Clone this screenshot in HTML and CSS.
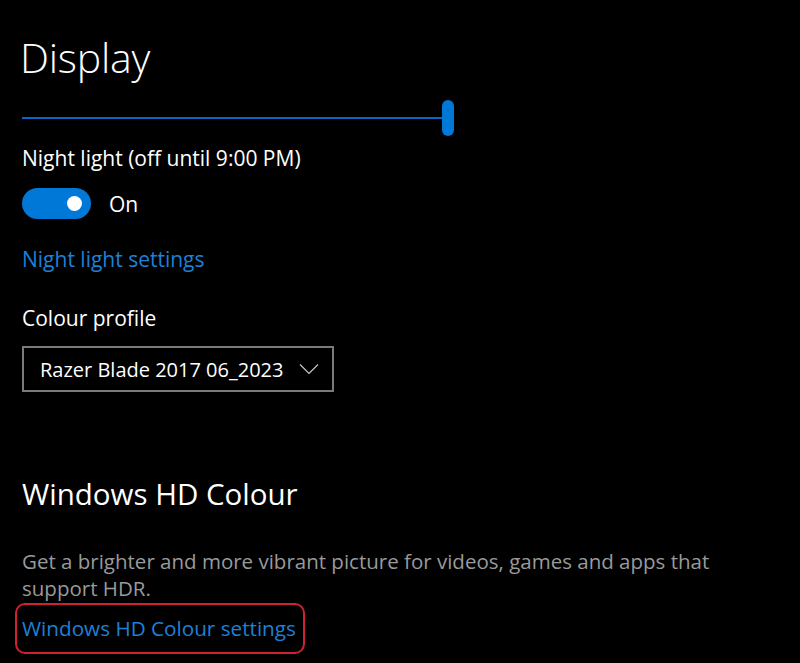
FILE: index.html
```html
<!DOCTYPE html>
<html lang="en">
<head>
<meta charset="utf-8">
<title>Display</title>
<link rel="stylesheet" href="styles.css">
</head>
<body>
<main class="page">
  <h1 class="title">Display</h1>
  <div class="slider">
    <div class="slider-track"></div>
    <div class="slider-thumb"></div>
  </div>
  <div class="label label-night">Night light (off until 9:00 PM)</div>
  <div class="toggle-row">
    <div class="toggle"><span class="toggle-knob"></span></div>
    <span class="toggle-text">On</span>
  </div>
  <a class="link link-night" href="#">Night light settings</a>
  <div class="label label-profile">Colour profile</div>
  <div class="dropdown">
    <span class="dropdown-text">Razer Blade 2017 06_2023</span>
    <svg class="chevron" width="20" height="12" viewBox="0 0 20 12"><polyline points="1,1.5 10,10.5 19,1.5" fill="none" stroke="#c8c8c8" stroke-width="1.2"/></svg>
  </div>
  <h2 class="subtitle">Windows HD Colour</h2>
  <p class="desc">Get a brighter and more vibrant picture for videos, games and apps that support HDR.</p>
  <div class="highlight">
    <a class="link link-hdr" href="#">Windows HD Colour settings</a>
  </div>
</main>
</body>
</html>
```

FILE: styles.css
```css
html, body {
  margin: 0;
  padding: 0;
  background: #000;
}
body {
  width: 800px;
  height: 663px;
  overflow: hidden;
  font-family: "Open Sans", "Noto Sans", sans-serif;
  color: #fff;
}
.page {
  display: flex;
  flex-direction: column;
  align-items: flex-start;
  padding-left: 22px;
}
.title {
  margin: 32px 0 0 -2px;
  font-size: 41px;
  font-weight: 300;
  line-height: 50px;
  letter-spacing: -0.2px;
}
.slider {
  margin-top: 18px;
  width: 432px;
  height: 36px;
  display: flex;
  align-items: center;
}
.slider-track {
  flex: 1;
  height: 2px;
  background: #0a66c2;
}
.slider-thumb {
  width: 12px;
  height: 36px;
  border-radius: 6px;
  background: #0078d7;
  margin-left: -6px;
}
.label {
  font-size: 21px;
  line-height: 28px;
  color: #fff;
}
.label-night { margin-top: 8px; }
.toggle-row {
  margin-top: 16px;
  display: flex;
  align-items: center;
  height: 31px;
}
.toggle {
  width: 69px;
  height: 31px;
  border-radius: 16px;
  background: #0078d7;
  display: flex;
  align-items: center;
  justify-content: flex-end;
  padding-right: 9px;
  box-sizing: border-box;
}
.toggle-knob {
  width: 15px;
  height: 15px;
  border-radius: 50%;
  background: #fff;
}
.toggle-text {
  margin-left: 18px;
  font-size: 21px;
  line-height: 28px;
}
.link {
  font-size: 21px;
  line-height: 28px;
  color: #1c80d8;
  text-decoration: none;
}
.link-night { margin-top: 26px; }
.label-profile { margin-top: 31px; }
.dropdown {
  margin-top: 14px;
  width: 312px;
  height: 46px;
  box-sizing: border-box;
  border: 2px solid #7a7a7a;
  display: flex;
  align-items: center;
  padding-left: 16px;
  padding-right: 13px;
}
.dropdown-text {
  flex: 1;
  font-size: 20px;
  line-height: 28px;
  padding-top: 1px;
}
.chevron { display: block; }
.subtitle {
  margin: 82px 0 0;
  font-size: 29.5px;
  font-weight: 400;
  line-height: 40px;
}
.desc {
  margin: 34px 0 0;
  width: 720px;
  font-size: 20.5px;
  line-height: 27px;
  color: #9a9a9a;
}
.highlight {
  margin-top: 1px;
  margin-left: -7px;
  border: 2px solid #d1202e;
  border-radius: 10px;
  padding: 9px 7px 10px 5px;
}
.link-hdr {
  display: block;
  font-size: 20.7px;
}
```
